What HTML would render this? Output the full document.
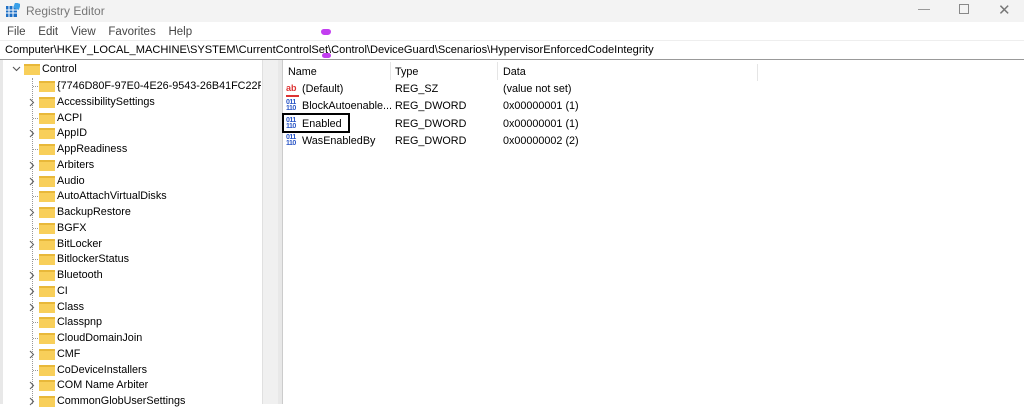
<!DOCTYPE html><html><head><style>
body{margin:0;width:1024px;height:404px;overflow:hidden;background:#fff;font-family:"Liberation Sans",sans-serif;font-size:10.8px;color:#000;position:relative}
.a{position:absolute;white-space:nowrap}
.g{color:#777}
.fold{position:absolute;width:16px;height:11px;background:#f8cf5a;border-top:2px solid #e8b83a;box-sizing:border-box}
.chev{position:absolute}
.ln{position:absolute;border-left:1px dotted #999}
.ic{position:absolute;width:13px;height:13px;font-size:7px;line-height:6px;color:#2a56c6;font-weight:bold;letter-spacing:-0.5px}
</style></head><body>
<div class="a" style="left:0;top:0;width:1024px;height:22px;background:#f3f3f3"></div>
<svg class="a" style="left:6px;top:3px" width="14" height="14"><rect x="0" y="3" width="11" height="11" fill="#1e6fc4"/><path d="M3 3v11M7 3v11M0 7h11M0 10h11" stroke="#fff" stroke-width="1"/><rect x="8" y="0" width="6" height="6" fill="#3aa0e8" transform="rotate(20 11 3)"/></svg>
<div class="a g" style="left:26px;top:4px;font-size:12px">Registry Editor</div>
<div class="a" style="left:918px;top:9px;width:12px;border-top:1px solid #999"></div>
<div class="a" style="left:959px;top:4px;width:8px;height:8px;border:1px solid #888"></div>
<div class="a g" style="left:998px;top:1px;font-size:15px">✕</div>
<div class="a" style="left:7px;top:26px;color:#444;font-size:11.5px">File&nbsp;&nbsp;&nbsp; Edit&nbsp;&nbsp;&nbsp; View&nbsp;&nbsp;&nbsp; Favorites&nbsp;&nbsp;&nbsp; Help</div>
<div class="a" style="left:321px;top:29px;width:10px;height:6px;background:#c23ef0;border-radius:5px 5px 6px 6px"></div>
<div class="a" style="left:0;top:40px;width:1024px;height:1px;background:#eee"></div>
<div class="a" style="left:5px;top:44px;font-size:11.1px">Computer\HKEY_LOCAL_MACHINE\SYSTEM\CurrentControlSet\Control\DeviceGuard\Scenarios\HypervisorEnforcedCodeIntegrity</div>
<div class="a" style="left:322px;top:53px;width:9px;height:5px;background:#c23ef0;border-radius:4px"></div>
<div class="a" style="left:0;top:59px;width:1024px;height:1px;background:#999"></div>
<div class="a" style="left:0;top:60px;width:3px;height:344px;background:#e8e8e8"></div>
<div class="a" style="left:262px;top:60px;width:16px;height:344px;background:#f0f0f0;border-left:1px solid #e0e0e0"></div>
<div class="a" style="left:278px;top:60px;width:4px;height:344px;background:#e8e8e8;border-right:1px solid #ccc"></div>
<div class="ln" style="left:32px;top:78px;height:326px"></div>
<svg class="chev" style="left:12px;top:66px" width="9" height="6"><path d="M1 1l3.5 3.5L8 1" fill="none" stroke="#555" stroke-width="1.1"/></svg>
<div class="fold" style="left:24px;top:64px"></div>
<div class="a" style="left:42px;top:63px">Control</div>
<div id="tree"></div>
<div class="a" style="left:284px;top:64px;width:473px;height:17px;border-right:1px solid #e5e5e5"></div>
<div class="a" style="left:390px;top:62px;height:18px;border-left:1px solid #e5e5e5"></div>
<div class="a" style="left:497px;top:62px;height:18px;border-left:1px solid #e5e5e5"></div>
<div class="a" style="left:288px;top:66px">Name</div><div class="a" style="left:395px;top:66px">Type</div><div class="a" style="left:503px;top:66px">Data</div>
<div class="a" style="left:286px;top:83px;width:13px;height:12px;color:#d33;font-size:9px;font-weight:bold;border-bottom:2px solid #d33;line-height:10px">ab</div>
<div class="a" style="left:302px;top:83px">(Default)</div><div class="a" style="left:395px;top:83px">REG_SZ</div><div class="a" style="left:503px;top:83px">(value not set)</div>
<div class="ic" style="left:286px;top:100px">011<br>110</div><div class="a" style="left:302px;top:100px">BlockAutoenable...</div><div class="a" style="left:395px;top:100px">REG_DWORD</div><div class="a" style="left:503px;top:100px">0x00000001 (1)</div>
<div class="ic" style="left:286px;top:118px">011<br>110</div><div class="a" style="left:302px;top:118px">Enabled</div><div class="a" style="left:395px;top:118px">REG_DWORD</div><div class="a" style="left:503px;top:118px">0x00000001 (1)</div>
<div class="ic" style="left:286px;top:135px">011<br>110</div><div class="a" style="left:302px;top:135px">WasEnabledBy</div><div class="a" style="left:395px;top:135px">REG_DWORD</div><div class="a" style="left:503px;top:135px">0x00000002 (2)</div>
<div class="a" style="left:282px;top:113px;width:64px;height:16px;border:2px solid #000"></div>
<script>
var it=[["{7746D80F-97E0-4E26-9543-26B41FC22F79",0],["AccessibilitySettings",1],["ACPI",0],["AppID",1],["AppReadiness",0],["Arbiters",1],["Audio",1],["AutoAttachVirtualDisks",0],["BackupRestore",1],["BGFX",0],["BitLocker",1],["BitlockerStatus",0],["Bluetooth",1],["CI",1],["Class",1],["Classpnp",0],["CloudDomainJoin",0],["CMF",1],["CoDeviceInstallers",0],["COM Name Arbiter",1],["CommonGlobUserSettings",1]];
var h="";it.forEach(function(e,i){var y=80+i*15.75;
h+=e[1]?'<svg class="chev" style="left:29px;top:'+(y+2)+'px" width="6" height="9"><path d="M1 1l3.5 3.5L1 8" fill="none" stroke="#666" stroke-width="1.1"/></svg>':'<div class="a" style="left:33px;top:'+(y+6)+'px;width:5px;border-top:1px dotted #999"></div>';
h+='<div class="fold" style="left:39px;top:'+(y+1)+'px"></div><div class="a" style="left:57px;top:'+y+'px;max-width:204px;overflow:hidden">'+e[0]+'</div>';});
document.getElementById("tree").innerHTML=h;
</script>
</body></html>
